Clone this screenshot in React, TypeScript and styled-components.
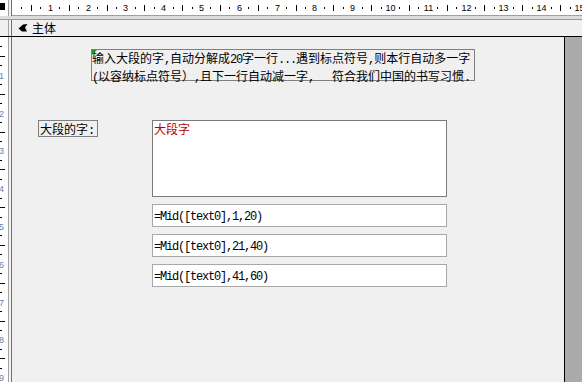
import React from "react";
import styled, { createGlobalStyle } from "styled-components";

const CM = 37.8;

const GlobalStyle = createGlobalStyle`
    html, body {
        margin: 0;
        padding: 0;
        overflow: hidden;
        background: #f0f0f0;
    }
`;

const Window = styled.div`
    width: 582px;
    height: 382px;
    overflow: hidden;
    display: flex;
    flex-direction: column;
    background: #f0f0f0;
    font-family: "Noto Sans CJK SC", sans-serif;
    font-size: 12px;
    color: #000;
`;

const RulerRow = styled.div`
    display: flex;
    height: 16px;
    flex: none;
`;

const Corner = styled.div`
    width: 8px;
    background: #ffffff;
    position: relative;
    padding-top: 3px;
    box-sizing: border-box;
`;

const Selector = styled.div`
    width: 5px;
    height: 7px;
    background: #000;
`;

const Sep = styled.div`
    width: 2px;
    flex: none;
    background: #f4f4f4;
    border-left: 1px solid #a0a0a0;
    border-right: 1px solid #6e6e6e;
`;

const HRuler = styled.div`
    flex: 1;
    background: #ffffff;
    border-bottom: 1px solid #a0a0a0;
    overflow: hidden;
`;

const Band = styled.div`
    height: 4px;
    flex: none;
    background: #dcdcdc;
    border-bottom: 1px solid #9a9a9a;
    box-sizing: border-box;
`;

const HeaderRow = styled.div`
    display: flex;
    height: 17px;
    flex: none;
    border-bottom: 1px solid #000;
    box-sizing: border-box;
`;

const HeaderStub = styled.div`
    width: 8px;
    background: #f0f0f0;
`;

const SectionBar = styled.div`
    flex: 1;
    display: flex;
    align-items: center;
    gap: 4px;
    padding-left: 6px;
    background: #f0f0f0;
    line-height: 16px;

    svg {
        display: block;
    }
`;

const Body = styled.div`
    flex: 1;
    display: flex;
    min-height: 0;
`;

const VRuler = styled.div`
    width: 8px;
    flex: none;
    background: #ffffff;
    overflow: hidden;
`;

const Canvas = styled.div`
    flex: 1;
    display: flex;
    flex-direction: column;
    align-items: flex-start;
    padding-top: 12px;
    background: #f0f0f0;
`;

const Gutter = styled.div`
    width: 17px;
    flex: none;
    background: #ababab;
    border-left: 1px solid #000;
`;

const NoteBox = styled.div`
    position: relative;
    margin-left: 79px;
    width: 384px;
    height: 32px;
    box-sizing: border-box;
    border: 1px solid #808080;
    padding: 0 0 0 0;
    line-height: 15px;

    &::before {
        content: "";
        position: absolute;
        top: 0;
        left: 0;
        border-top: 5px solid #1a9a1a;
        border-right: 5px solid transparent;
    }
`;

const Line = styled.div`
    white-space: pre;
`;

const Half = styled.span`
    font-family: "Liberation Mono", monospace;
    letter-spacing: -1.2px;
    white-space: pre;
`;

const FormRow = styled.div`
    display: flex;
    align-items: flex-start;
    gap: 54px;
    margin-left: 26px;
    margin-top: 39px;
`;

const FieldLabel = styled.div`
    width: 60px;
    height: 17px;
    box-sizing: border-box;
    border: 1px solid #808080;
    padding-left: 1px;
    line-height: 15px;
    white-space: pre;
`;

const Fields = styled.div`
    display: flex;
    flex-direction: column;
    gap: 7px;
`;

const TextBox = styled.div<{ $tall?: boolean }>`
    width: 295px;
    height: ${(p) => (p.$tall ? "77px" : "23px")};
    box-sizing: border-box;
    background: #ffffff;
    border: 1px solid ${(p) => (p.$tall ? "#7a7a7a" : "#a8a8a8")};
    padding: ${(p) => (p.$tall ? "1px 1px" : "2px 1px")};
    line-height: ${(p) => (p.$tall ? "14px" : "16px")};
    color: ${(p) => (p.$tall ? "#c00000" : "#000")};
    white-space: pre;
`;

const SectionIcon = () => (
    <svg width="10" height="10" viewBox="0 0 10 10">
        <path d="M0.5 5.5 L5 1.5 L9.5 1 L7 4.5 L9 8.5 L4 8.5 Z" fill="#000" />
    </svg>
);

const TopRulerMarks = () => {
    const items: React.ReactNode[] = [];
    for (let q = 1; q < 64; q++) {
        const x = Math.round(q * CM / 4) + 0.5;
        if (q % 4 === 0) {
            items.push(
                <text key={q} x={x} y={11} fontSize="9" textAnchor="middle" fontFamily="Liberation Sans, sans-serif" fill="#000">
                    {q / 4}
                </text>
            );
        } else if (q % 2 === 0) {
            items.push(<line key={q} x1={x} x2={x} y1={5} y2={11} stroke="#000" strokeWidth="1" />);
        } else {
            items.push(<line key={q} x1={x} x2={x} y1={7} y2={9} stroke="#000" strokeWidth="1" />);
        }
    }
    return (
        <svg width="570" height="15" style={{ display: "block" }}>
            {items}
        </svg>
    );
};

const SideRulerMarks = () => {
    const items: React.ReactNode[] = [];
    for (let q = 1; q < 38; q++) {
        const y = Math.round(q * CM / 4) + 0.5;
        if (q % 4 === 0) {
            items.push(
                <text key={q} x={-1} y={y + 3} fontSize="9" fontFamily="Liberation Sans, sans-serif" fill="#6a7fa0">
                    {q / 4}
                </text>
            );
        } else if (q % 2 === 0) {
            items.push(<line key={q} x1={0} x2={5} y1={y} y2={y} stroke="#000" strokeWidth="1" />);
        } else {
            items.push(<line key={q} x1={0} x2={2} y1={y} y2={y} stroke="#000" strokeWidth="1" />);
        }
    }
    return (
        <svg width="8" height="345" style={{ display: "block" }}>
            {items}
        </svg>
    );
};

export default function App() {
    return (
        <>
            <GlobalStyle />
            <Window>
                <RulerRow>
                    <Corner>
                        <Selector />
                    </Corner>
                    <Sep />
                    <HRuler>
                        <TopRulerMarks />
                    </HRuler>
                </RulerRow>
                <Band />
                <HeaderRow>
                    <HeaderStub />
                    <Sep />
                    <SectionBar>
                        <SectionIcon />
                        主体
                    </SectionBar>
                </HeaderRow>
                <Body>
                    <VRuler>
                        <SideRulerMarks />
                    </VRuler>
                    <Sep />
                    <Canvas>
                        <NoteBox>
                            <Line>
                                输入大段的字<Half>,</Half>自动分解成<Half>20</Half>字一行<Half>...</Half>遇到标点符号<Half>,</Half>则本行自动多一字
                            </Line>
                            <Line>
                                <Half>(</Half>以容纳标点符号）<Half>,</Half>且下一行自动减一字<Half>,   </Half>符合我们中国的书写习惯<Half>.</Half>
                            </Line>
                        </NoteBox>
                        <FormRow>
                            <FieldLabel>
                                大段的字<Half>:</Half>
                            </FieldLabel>
                            <Fields>
                                <TextBox $tall>大段字</TextBox>
                                <TextBox>
                                    <Half>=Mid([text0],1,20)</Half>
                                </TextBox>
                                <TextBox>
                                    <Half>=Mid([text0],21,40)</Half>
                                </TextBox>
                                <TextBox>
                                    <Half>=Mid([text0],41,60)</Half>
                                </TextBox>
                            </Fields>
                        </FormRow>
                    </Canvas>
                    <Gutter />
                </Body>
            </Window>
        </>
    );
}
